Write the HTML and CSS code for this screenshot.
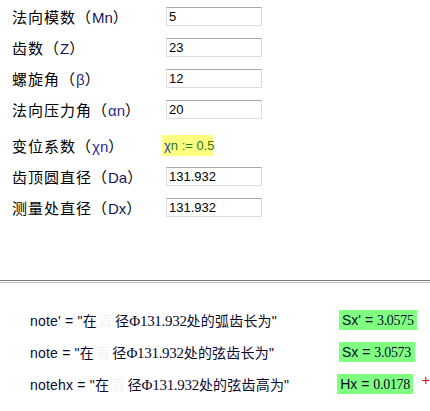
FILE: index.html
```html
<!DOCTYPE html>
<html>
<head>
<meta charset="utf-8">
<link rel="stylesheet" href="styles.css">
</head>
<body>
<div class="params">
  <div class="row"><span class="label">法向模数（<span class="lat">Mn</span>）</span><span class="field">5</span></div>
  <div class="row"><span class="label">齿数（<span class="lat">Z</span>）</span><span class="field">23</span></div>
  <div class="row"><span class="label">螺旋角（<span class="lat greek">β</span>）</span><span class="field">12</span></div>
  <div class="row"><span class="label">法向压力角（<span class="lat greek">αn</span>）</span><span class="field">20</span></div>
  <div class="row row-def"><span class="label">变位系数（<span class="lat greek">χn</span>）</span><span class="def"><span class="chi">χ</span>n := 0.5</span></div>
  <div class="row row-after"><span class="label">齿顶圆直径（<span class="lat">Da</span>）</span><span class="field">131.932</span></div>
  <div class="row"><span class="label">测量处直径（<span class="lat">Dx</span>）</span><span class="field">131.932</span></div>
</div>
<div class="rule"></div>
<div class="results">
  <div class="res"><span class="note">note' = "在<span class="ghost">直</span>径<span class="tnr">Φ131.932</span>处的弧齿长为"</span><span class="val w78">Sx' = <span class="tnr">3.0575</span></span></div>
  <div class="res"><span class="note">note = "在<span class="ghost">直</span>径<span class="tnr">Φ131.932</span>处的弦齿长为"</span><span class="val">Sx = <span class="tnr">3.0573</span></span></div>
  <div class="res"><span class="note">notehx = "在<span class="ghost">直</span>径<span class="tnr">Φ131.932</span>处的弦齿高为"</span><span class="val">Hx = <span class="tnr">0.0178</span></span><span class="plus">+</span></div>
</div>
</body>
</html>
```

FILE: styles.css
```css
html, body {
  margin: 0;
  padding: 0;
  background: #ffffff;
  width: 430px;
  height: 411px;
  overflow: hidden;
}
body {
  font-family: "Noto Sans CJK SC", "Liberation Sans", sans-serif;
  color: #000000;
}
.params {
  display: flex;
  flex-direction: column;
  gap: 12px;
  padding: 7px 0 0 12px;
}
.row {
  display: flex;
  align-items: center;
  height: 19px;
}
.row-def {
  margin-top: 4px;
  height: 21px;
}
.row-after {
  margin-top: -1px;
}
.label {
  width: 154px;
  font-size: 15px;
  line-height: 19px;
  letter-spacing: 1px;
  white-space: nowrap;
}
.lat {
  font-family: "Liberation Sans", Arial, sans-serif;
  color: #141460;
  font-size: 15px;
  letter-spacing: 0;
}
.greek {
  color: #2a2a9a;
}
.field {
  box-sizing: border-box;
  width: 96px;
  height: 19px;
  border: 1px solid #dcdce4;
  border-top-color: #a8a8a8;
  font-family: "Liberation Sans", Arial, sans-serif;
  font-size: 13px;
  line-height: 17px;
  padding-left: 2px;
  color: #000000;
}
.def {
  margin-left: -4px;
  height: 21px;
  width: 51px;
  box-sizing: border-box;
  background: #ffff80;
  font-family: "Liberation Sans", Arial, sans-serif;
  font-size: 13px;
  line-height: 22px;
  padding-left: 2px;
  color: #1f7a1f;
  white-space: nowrap;
}
.chi {
  color: #2a40b0;
}
.rule {
  margin-top: 63px;
  height: 1px;
  border-top: 1px solid #7c7c7c;
  border-bottom: 1px solid #c4c4c4;
}
.results {
  display: flex;
  flex-direction: column;
  gap: 13px;
  padding: 27px 0 0 30px;
}
.res {
  display: flex;
  align-items: center;
  height: 19px;
}
.note {
  width: 309px;
  font-family: "Liberation Sans", "Noto Sans CJK SC", sans-serif;
  font-size: 14px;
  color: #0a0a30;
  white-space: nowrap;
  letter-spacing: 0.2px;
}
.ghost {
  color: #f3f3f3;
  font-family: "Noto Sans CJK SC", sans-serif;
  margin: 0 2px;
}
.tnr {
  font-family: "Liberation Serif", "Times New Roman", serif;
  font-size: 15px;
  letter-spacing: -0.3px;
}
.val {
  box-sizing: border-box;
  width: 76px;
  height: 20px;
  background: #80ff80;
  font-family: "Liberation Sans", Arial, sans-serif;
  font-size: 14px;
  line-height: 20px;
  padding-left: 3px;
  color: #0a0a30;
  white-space: nowrap;
}
.val .tnr {
  font-size: 14px;
}
.w78 {
  width: 78px;
}
.plus {
  margin-left: 9px;
  color: #e00000;
  font-family: "Liberation Sans", Arial, sans-serif;
  font-size: 14px;
  line-height: 14px;
  margin-top: -8px;
}
```
